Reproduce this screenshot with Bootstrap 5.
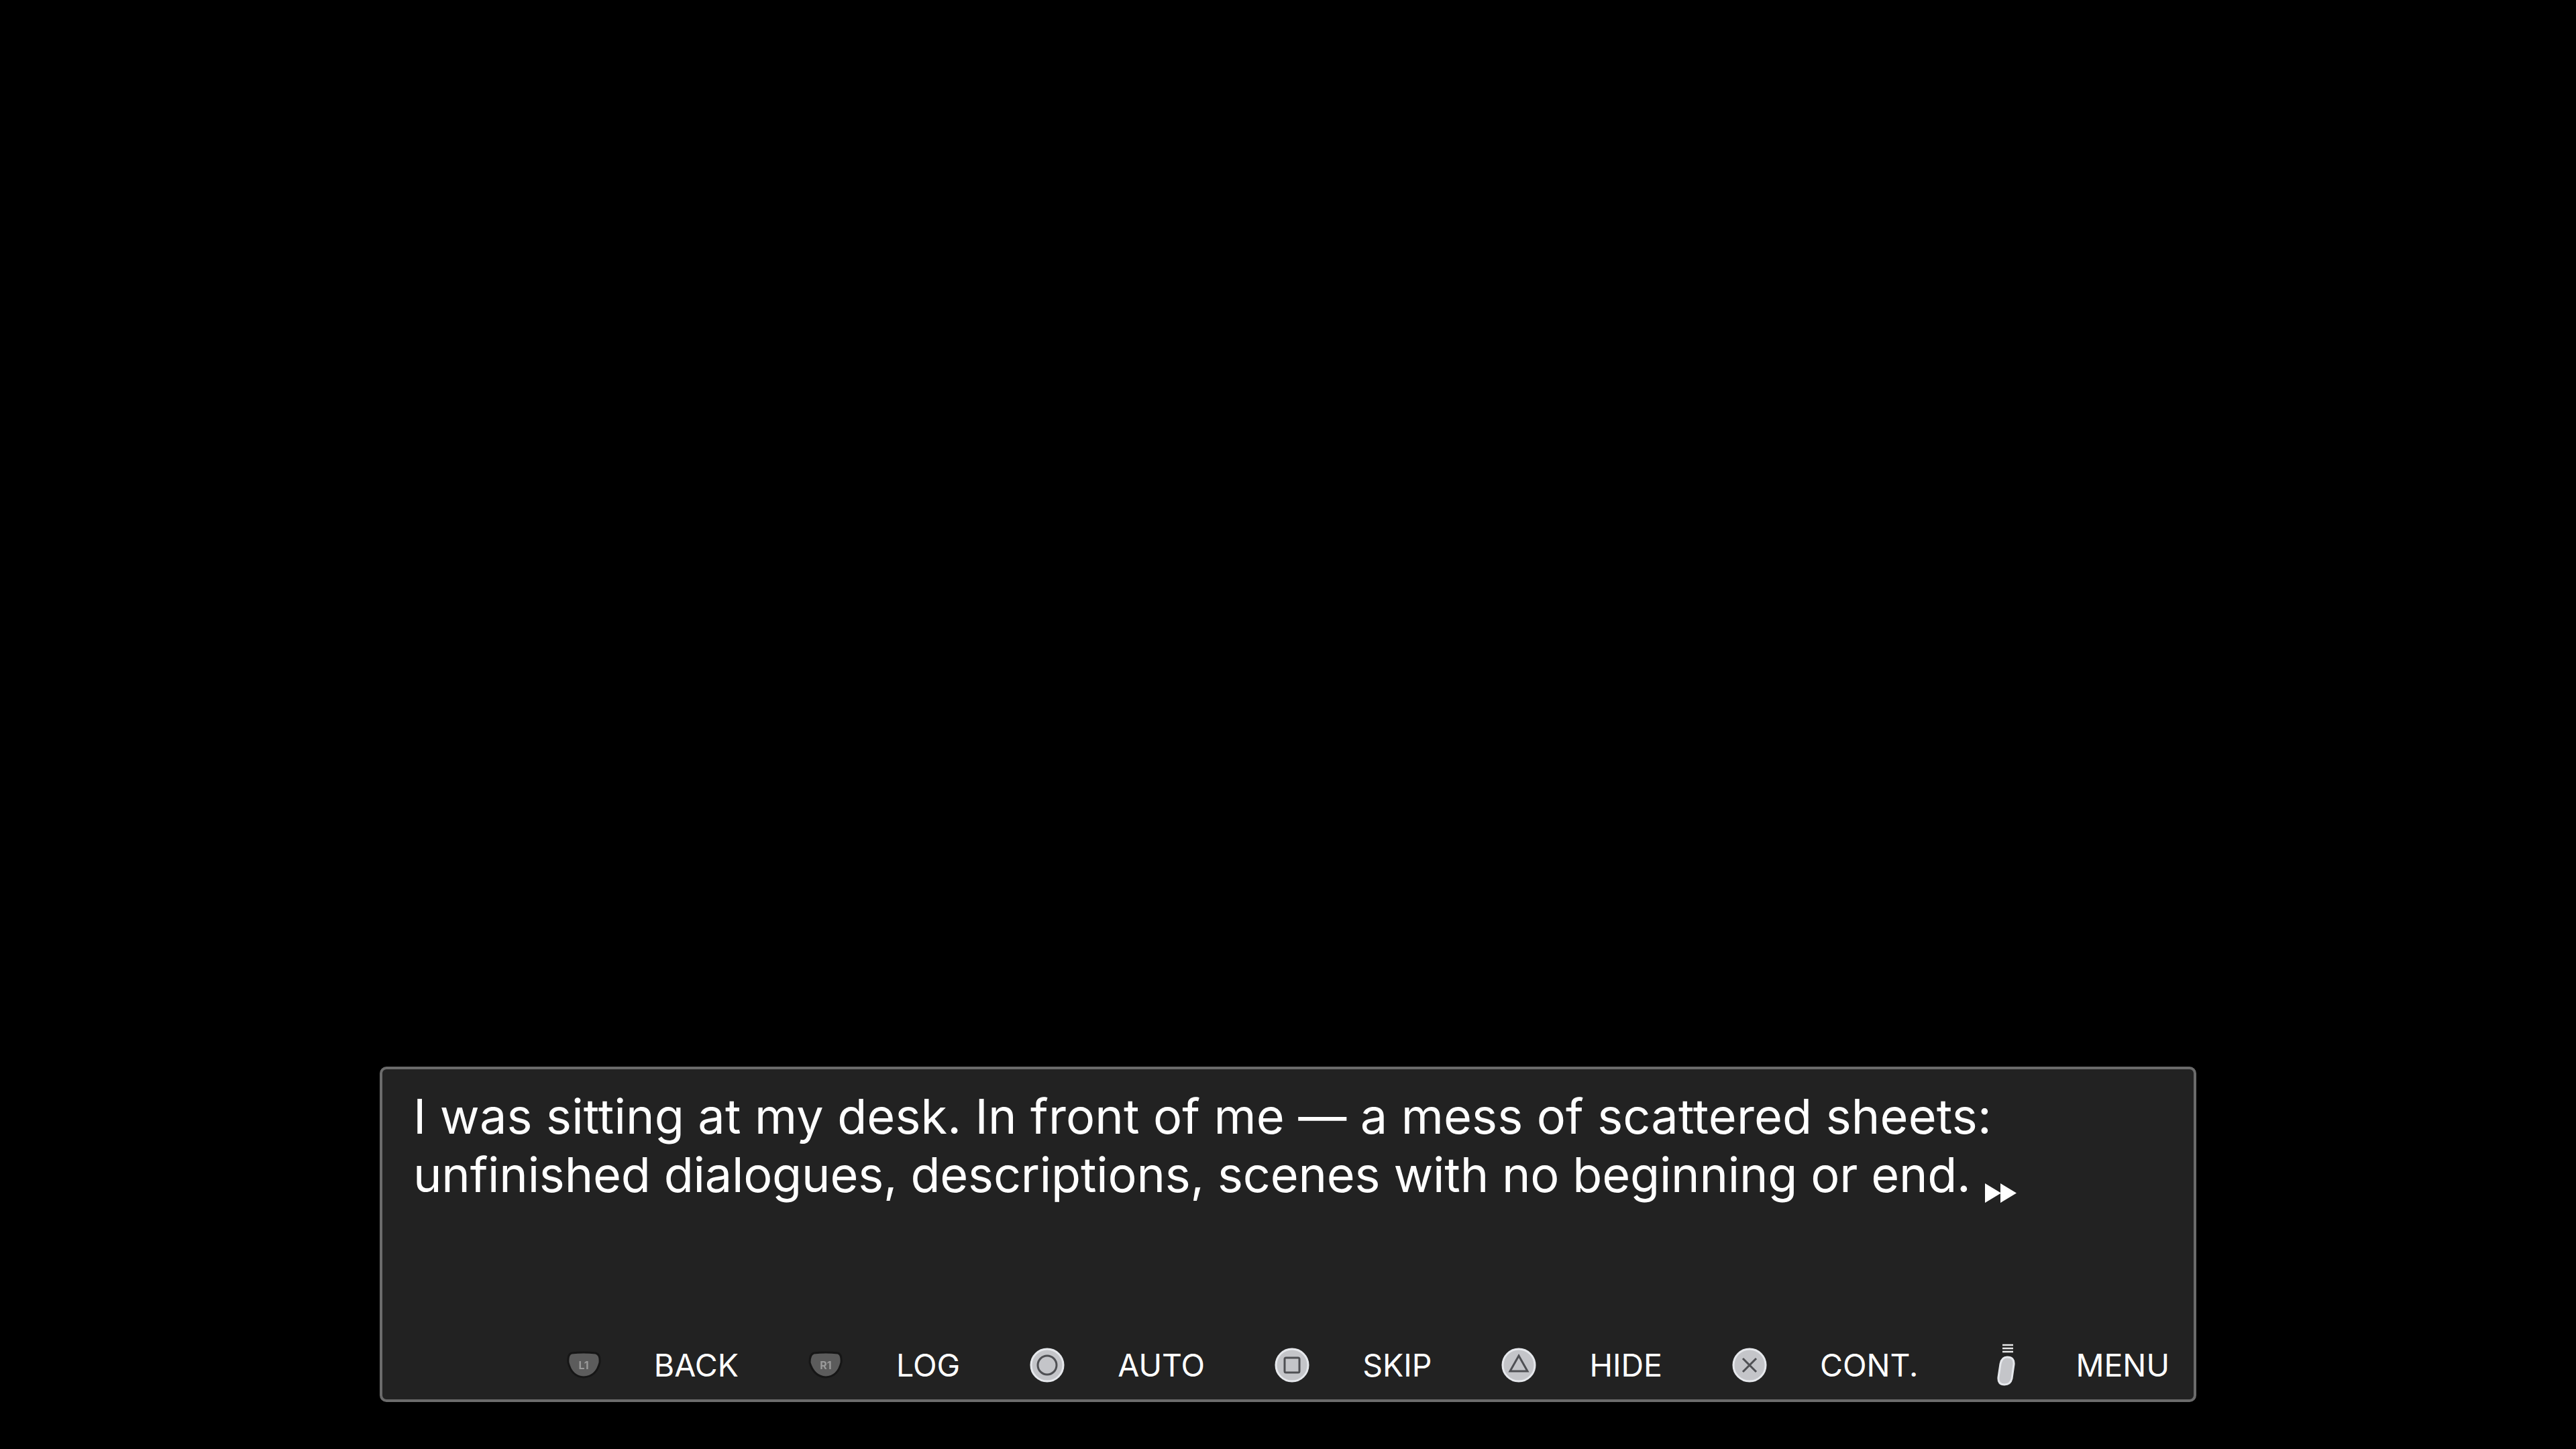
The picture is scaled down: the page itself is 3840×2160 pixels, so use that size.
<!DOCTYPE html>
<html lang="en">
<head>
    <meta charset="UTF-8">
    <meta name="viewport" content="width=device-width, initial-scale=1.0">
    <title>Dialogue</title>

    <link href="https://cdn.jsdelivr.net/npm/bootstrap@5.3.0/dist/css/bootstrap.min.css" rel="stylesheet">
    <style>
        html, body { height: 100%; background: #000; }
        body { font-family: Inter, "Liberation Sans", sans-serif; color: #fff; }
        .stage { height: 2160px; padding-bottom: 70px; }
        .textbox {
            width: 2708px;
            height: 500px;
            background: #222;
            border: 4px solid #6b6b6b;
            border-radius: 10px;
            padding: 26px 36px 19px 46px;
        }
        .dialogue { font-size: 72px; line-height: 87px; }
        .line-one { letter-spacing: .14px; }
        .line-two { letter-spacing: -.22px; }
        .skip-mark { width: 47px; height: 29px; margin-left: 21px; vertical-align: -16px; }
        .hints { font-size: 46.5px; line-height: 60px; gap: 103px; }
        .hint { gap: 78px; }
        .hint-icon { height: 64px; width: 54px; flex: none; filter: blur(.6px); }
        .hint-icon text { font-family: Inter, "Liberation Sans", sans-serif; font-weight: 700; font-size: 16px; fill: #9a9a9a; }
    </style>
</head>
<body>
    <div class="stage d-flex justify-content-center align-items-end">
        <div class="textbox d-flex flex-column justify-content-between">
            <div class="dialogue">
                <span class="line-one">I was sitting at my desk. In front of me — a mess of scattered sheets:</span><br>
                <span class="line-two">unfinished dialogues, descriptions, scenes with no beginning or end.</span><svg class="skip-mark" viewBox="0 0 47 29"><path d="M0 0 L24 14.5 L0 29Z M23 0 L47 14.5 L23 29Z" fill="#fff"/></svg>
            </div>
            <div class="hints d-flex justify-content-end align-items-center">
                <div class="hint d-flex align-items-center">
                    <svg class="hint-icon" viewBox="0 0 54 64"><path d="M9 14 Q27 12 45 14 Q52 16 51 28 Q46 49 27 50 Q9 49 4 28 Q3 16 9 14Z" fill="#5c5c5c" stroke="#161616" stroke-width="3"/><text x="27" y="38" text-anchor="middle">L1</text></svg>
                    <span>BACK</span>
                </div>
                <div class="hint d-flex align-items-center">
                    <svg class="hint-icon" viewBox="0 0 54 64"><path d="M9 14 Q27 12 45 14 Q51 16 50 28 Q45 49 27 50 Q9 49 3 28 Q3 16 9 14Z" fill="#5c5c5c" stroke="#161616" stroke-width="3"/><text x="27" y="38" text-anchor="middle">R1</text></svg>
                    <span>LOG</span>
                </div>
                <div class="hint d-flex align-items-center">
                    <svg class="hint-icon" viewBox="0 0 54 64"><circle cx="27" cy="32" r="24" fill="#c4c5c9" stroke="#e6e8ec" stroke-width="3"/><circle cx="27" cy="32" r="14" fill="none" stroke="#4f5054" stroke-width="3"/></svg>
                    <span>AUTO</span>
                </div>
                <div class="hint d-flex align-items-center">
                    <svg class="hint-icon" viewBox="0 0 54 64"><circle cx="27" cy="32" r="24" fill="#c4c5c9" stroke="#e6e8ec" stroke-width="3"/><rect x="16" y="21" width="22" height="22" rx="2" fill="none" stroke="#4f5054" stroke-width="3"/></svg>
                    <span>SKIP</span>
                </div>
                <div class="hint d-flex align-items-center">
                    <svg class="hint-icon" viewBox="0 0 54 64"><circle cx="27" cy="32" r="24" fill="#c4c5c9" stroke="#e6e8ec" stroke-width="3"/><path d="M27 18 L40 41 L14 41Z" fill="none" stroke="#4f5054" stroke-width="3"/></svg>
                    <span>HIDE</span>
                </div>
                <div class="hint d-flex align-items-center">
                    <svg class="hint-icon" viewBox="0 0 54 64"><circle cx="27" cy="32" r="24" fill="#c4c5c9" stroke="#e6e8ec" stroke-width="3"/><path d="M17 22 L37 42 M37 22 L17 42" fill="none" stroke="#4f5054" stroke-width="3"/></svg>
                    <span>CONT.</span>
                </div>
                <div class="hint d-flex align-items-center">
                    <svg class="hint-icon" viewBox="0 0 54 64"><path d="M23 2 H39 M23 7 H39 M23 12 H39" stroke="#e8e8e8" stroke-width="2.5"/><path d="M30 20 Q41 20 40 31 L37 52 Q35 61 26 61 Q16 61 17 50 L20 30 Q22 20 30 20Z" fill="#c4c5c9" stroke="#e6e8ec" stroke-width="3"/></svg>
                    <span>MENU</span>
                </div>
            </div>
        </div>
    </div>

    <script src="https://cdn.jsdelivr.net/npm/bootstrap@5.3.0/dist/js/bootstrap.bundle.min.js"></script>
</body>
</html>
